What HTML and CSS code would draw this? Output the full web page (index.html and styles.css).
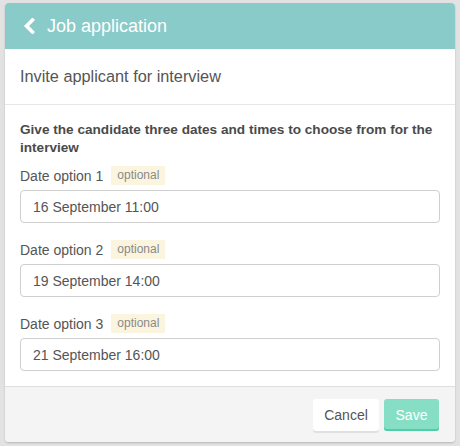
FILE: index.html
```html
<!DOCTYPE html>
<html>
<head>
<meta charset="utf-8">
<link rel="stylesheet" href="styles.css">
</head>
<body>
<div class="card">
  <div class="header">
    <svg class="back" width="12" height="16" viewBox="0 0 12 16"><polyline points="9.5,2 3.5,8 9.5,14" fill="none" stroke="#fff" stroke-width="3.6" stroke-linecap="square" stroke-linejoin="miter"/></svg>
    <span class="header-title">Job application</span>
  </div>
  <div class="subtitle">Invite applicant for interview</div>
  <div class="body">
    <p class="intro">Give the candidate three dates and times to choose from for the interview</p>
    <div class="field">
      <div class="label-row"><span class="label">Date option 1</span><span class="badge">optional</span></div>
      <div class="input">16 September 11:00</div>
    </div>
    <div class="field">
      <div class="label-row"><span class="label">Date option 2</span><span class="badge">optional</span></div>
      <div class="input">19 September 14:00</div>
    </div>
    <div class="field">
      <div class="label-row"><span class="label">Date option 3</span><span class="badge">optional</span></div>
      <div class="input">21 September 16:00</div>
    </div>
  </div>
  <div class="footer">
    <button class="btn cancel">Cancel</button>
    <button class="btn save">Save</button>
  </div>
</div>
</body>
</html>
```
FILE: styles.css
```css
* { box-sizing: border-box; }
html, body { margin: 0; }
body {
  background: #e2e2e2;
  padding: 3px 5px 0 5px;
  font-family: "Liberation Sans", Arial, sans-serif;
  width: 460px;
  height: 446px;
  overflow: hidden;
}
.card {
  width: 450px;
  height: 439px;
  background: #fff;
  border-radius: 4px;
  box-shadow: 0 1px 2px rgba(0,0,0,0.2);
  overflow: hidden;
  display: flex;
  flex-direction: column;
}
.header {
  height: 46px;
  background: #89cbc8;
  display: flex;
  align-items: center;
  padding-left: 18px;
  color: #fff;
}
.back { margin-right: 12px; margin-top: -1px; }
.header-title { font-size: 18px; }
.subtitle {
  height: 56px;
  border-bottom: 1px solid #e6e6e6;
  padding-left: 15px;
  display: flex;
  align-items: center;
  font-size: 16.3px;
  color: #555;
  padding-bottom: 1px;
}
.body {
  padding: 16px 15px 15px 15px;
}
.intro {
  margin: 0 0 9px 0;
  font-size: 13.6px;
  font-weight: bold;
  line-height: 18px;
  color: #4a4a4a;
}
.field + .field { margin-top: 17px; }
.label-row {
  height: 19px;
  display: flex;
  align-items: center;
  margin-bottom: 5px;
}
.label { font-size: 14px; color: #555; }
.badge {
  margin-left: 8px;
  background: #fbf4df;
  color: #8a8a8a;
  font-size: 12px;
  height: 19px;
  line-height: 19px;
  padding: 0 6px;
}
.input {
  height: 33px;
  border: 1px solid #cfcfcf;
  border-radius: 4px;
  padding-left: 12px;
  display: flex;
  align-items: center;
  font-size: 14px;
  color: #555;
}
.footer {
  flex: 1;
  background: #f4f4f4;
  border-top: 1px solid #dedede;
  display: flex;
  justify-content: flex-end;
  align-items: flex-start;
  padding: 12px 16px 0 0;
  gap: 5px;
}
.btn {
  height: 32px;
  border: none;
  border-radius: 3px;
  font-family: inherit;
  font-size: 14px;
  padding: 0;
}
.cancel {
  width: 66px;
  background: #fff;
  color: #555;
  box-shadow: 0 2px 0 #e0e0e0;
}
.save {
  width: 55px;
  background: #86dfc4;
  color: #fff;
  box-shadow: inset 0 -2px 0 #4fcfa6;
}
```
